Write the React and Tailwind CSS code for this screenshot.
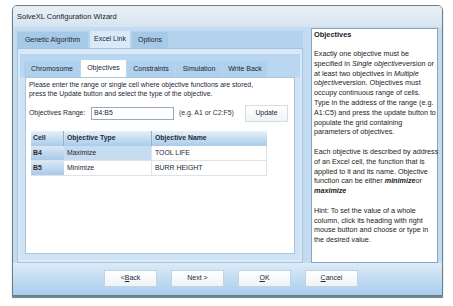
import React from "react";

const outerTabs = [
  { label: "Genetic Algorithm", w: "w-[71px]" },
  { label: "Excel Link", w: "w-[40px]", active: true },
  { label: "Options", w: "w-[36px]" },
];

const innerTabs = [
  { label: "Chromosome", w: "w-[56px]" },
  { label: "Objectives", w: "w-[45px]", active: true },
  { label: "Constraints", w: "w-[48px]" },
  { label: "Simulation", w: "w-[46px]" },
  { label: "Write Back", w: "w-[44px]" },
];

const rows = [
  { cell: "B4", type: "Maximize", name: "TOOL LIFE", selected: true },
  { cell: "B5", type: "Minimize", name: "BURR HEIGHT" },
];

const WizButton = ({ children }) => (
  <div className="w-[53px] h-[17px] flex items-center justify-center border border-[#c3d3e0] bg-gradient-to-b from-[#ffffff] to-[#eef3f7] text-[7px] text-[#1e2a36]">
    {children}
  </div>
);

const HelpLine = ({ children }) => (
  <div className="h-[9.8px] leading-[9.8px] whitespace-nowrap">{children}</div>
);

export default function App() {
  return (
    <div className="w-[453px] h-[306px] bg-white pt-[5px] pl-[12px] font-['Liberation_Sans',Arial,sans-serif] text-[#1b2733] overflow-hidden">
      <div className="w-[431px] h-[291px] border border-[#6f7b85] rounded-t-[5px] shadow-[0_2px_1px_#6a8587] bg-[#c4dcf1] flex flex-col overflow-hidden">
        {/* title bar */}
        <div className="h-[21px] shrink-0 flex items-center pl-[4px] bg-gradient-to-b from-[#e9f0f6] to-[#d6e4f0] text-[7.5px] text-[#1a1a1a]">
          SolveXL Configuration Wizard
        </div>

        <div className="flex h-[236px] shrink-0">
          {/* left column */}
          <div className="ml-[4px] w-[286px] flex flex-col">
            <div className="mt-[4px] h-[17px] flex items-end bg-[#b5d3ee]">
              {outerTabs.map((t) => (
                <div
                  key={t.label}
                  className={`${t.w} mr-[2px] flex items-center justify-center text-[7px] ${
                    t.active ? "h-[17px] bg-[#d9e9f7]" : "h-[16px] bg-[#a7c9e8]"
                  }`}
                >
                  {t.label}
                </div>
              ))}
            </div>
            <div className="flex-1 bg-[#d9e9f7] border border-[#a3c3df] pt-[5px] px-[2px] pb-[2px] flex flex-col">
              <div className="h-[23px] shrink-0 flex items-end pl-[4px] bg-[#b9d7f0]">
                {innerTabs.map((t) => (
                  <div
                    key={t.label}
                    className={`${t.w} mr-[1px] flex items-center justify-center text-[7px] ${
                      t.active ? "h-[17px] bg-white" : "h-[16px] bg-[#b0d1ee]"
                    }`}
                  >
                    {t.label}
                  </div>
                ))}
              </div>
              <div className="flex-1 bg-[#cfe3f5] px-[5px] pb-[6px] flex">
                <div className="flex-1 bg-white border border-[#a9c6df] pl-[3px] pt-[3px]">
                  <div className="text-[6.9px] leading-[8.5px]">
                    <div>Please enter the range or single cell where objective functions are stored,</div>
                    <div>press the Update button and select the type of the objective.</div>
                  </div>
                  <div className="mt-[6px] h-[18px] flex items-center text-[6.9px]">
                    <span className="w-[62px]">Objectives Range:</span>
                    <div className="w-[83px] h-[13px] border border-[#93abc0] flex items-center pl-[2px]">
                      B4:B5
                    </div>
                    <span className="ml-[5px] w-[66px] text-[#2a3540]">(e.g. A1 or C2:F5)</span>
                    <div className="w-[43px] h-[17px] flex items-center justify-center border border-[#d2dde6] bg-gradient-to-b from-[#ffffff] to-[#f0f4f7]">
                      Update
                    </div>
                  </div>
                  <div className="mt-[9px] ml-[2px] w-[236px] text-[6.9px]">
                    <div className="flex h-[15px] bg-gradient-to-b from-[#e5f0f9] to-[#a9cbea] font-bold text-[#1d2b38]">
                      <div className="w-[33px] pl-[2px] flex items-center border-r border-[#8fb3d4]">Cell</div>
                      <div className="w-[88px] pl-[3px] flex items-center border-r border-[#8fb3d4]">Objective Type</div>
                      <div className="w-[115px] pl-[3px] flex items-center">Objective Name</div>
                    </div>
                    {rows.map((r) => (
                      <div key={r.cell} className="flex h-[15px] border-b border-[#dde3e8]">
                        <div className="w-[33px] pl-[2px] flex items-center font-bold bg-gradient-to-b from-[#d9e8f6] to-[#a8c9e8] text-[#2a2a2a]">
                          {r.cell}
                        </div>
                        <div
                          className={`w-[88px] pl-[3px] flex items-center border-r border-[#dde3e8] ${
                            r.selected ? "bg-[#c5dcf1]" : "bg-white"
                          }`}
                        >
                          {r.type}
                        </div>
                        <div className="w-[115px] pl-[3px] flex items-center border-r border-[#dde3e8]">{r.name}</div>
                      </div>
                    ))}
                  </div>
                </div>
              </div>
            </div>
          </div>

          {/* help panel */}
          <div className="ml-[8px] mt-[1px] w-[127px] bg-white border border-[#8aa6c0] pl-[2px] pt-[1px] text-[7.2px] text-[#222]">
            <div className="font-bold text-[7.4px] leading-[10px]">Objectives</div>
            <div className="mt-[9px]">
              <HelpLine>Exactly one objective must be</HelpLine>
              <HelpLine>
                specified in <i>Single objective</i>version or
              </HelpLine>
              <HelpLine>
                at least two objectives in <i>Multiple</i>
              </HelpLine>
              <HelpLine>
                <i>objective</i>version. Objectives must
              </HelpLine>
              <HelpLine>occupy continuous range of cells.</HelpLine>
              <HelpLine>Type in the address of the range (e.g.</HelpLine>
              <HelpLine>A1:C5) and press the update button to</HelpLine>
              <HelpLine>populate the grid containing</HelpLine>
              <HelpLine>parameters of objectives.</HelpLine>
              <HelpLine>&nbsp;</HelpLine>
              <HelpLine>Each objective is described by address</HelpLine>
              <HelpLine>of an Excel cell, the function that is</HelpLine>
              <HelpLine>applied to it and its name. Objective</HelpLine>
              <HelpLine>
                function can be either <b><i>minimize</i></b>or
              </HelpLine>
              <HelpLine>
                <b><i>maximize</i></b>
              </HelpLine>
              <HelpLine>&nbsp;</HelpLine>
              <HelpLine>Hint: To set the value of a whole</HelpLine>
              <HelpLine>column, click its heading with right</HelpLine>
              <HelpLine>mouse button and choose or type in</HelpLine>
              <HelpLine>the desired value.</HelpLine>
            </div>
          </div>
        </div>

        {/* button strip */}
        <div className="flex-1 bg-gradient-to-b from-[#dcebf8] to-[#a9cdec] pl-[91px] pt-[7px] flex items-start gap-[14px]">
          <WizButton>
            &lt; <u>B</u>ack
          </WizButton>
          <WizButton>Next &gt;</WizButton>
          <WizButton>
            <u>O</u>K
          </WizButton>
          <WizButton>
            <u>C</u>ancel
          </WizButton>
        </div>
      </div>
    </div>
  );
}
